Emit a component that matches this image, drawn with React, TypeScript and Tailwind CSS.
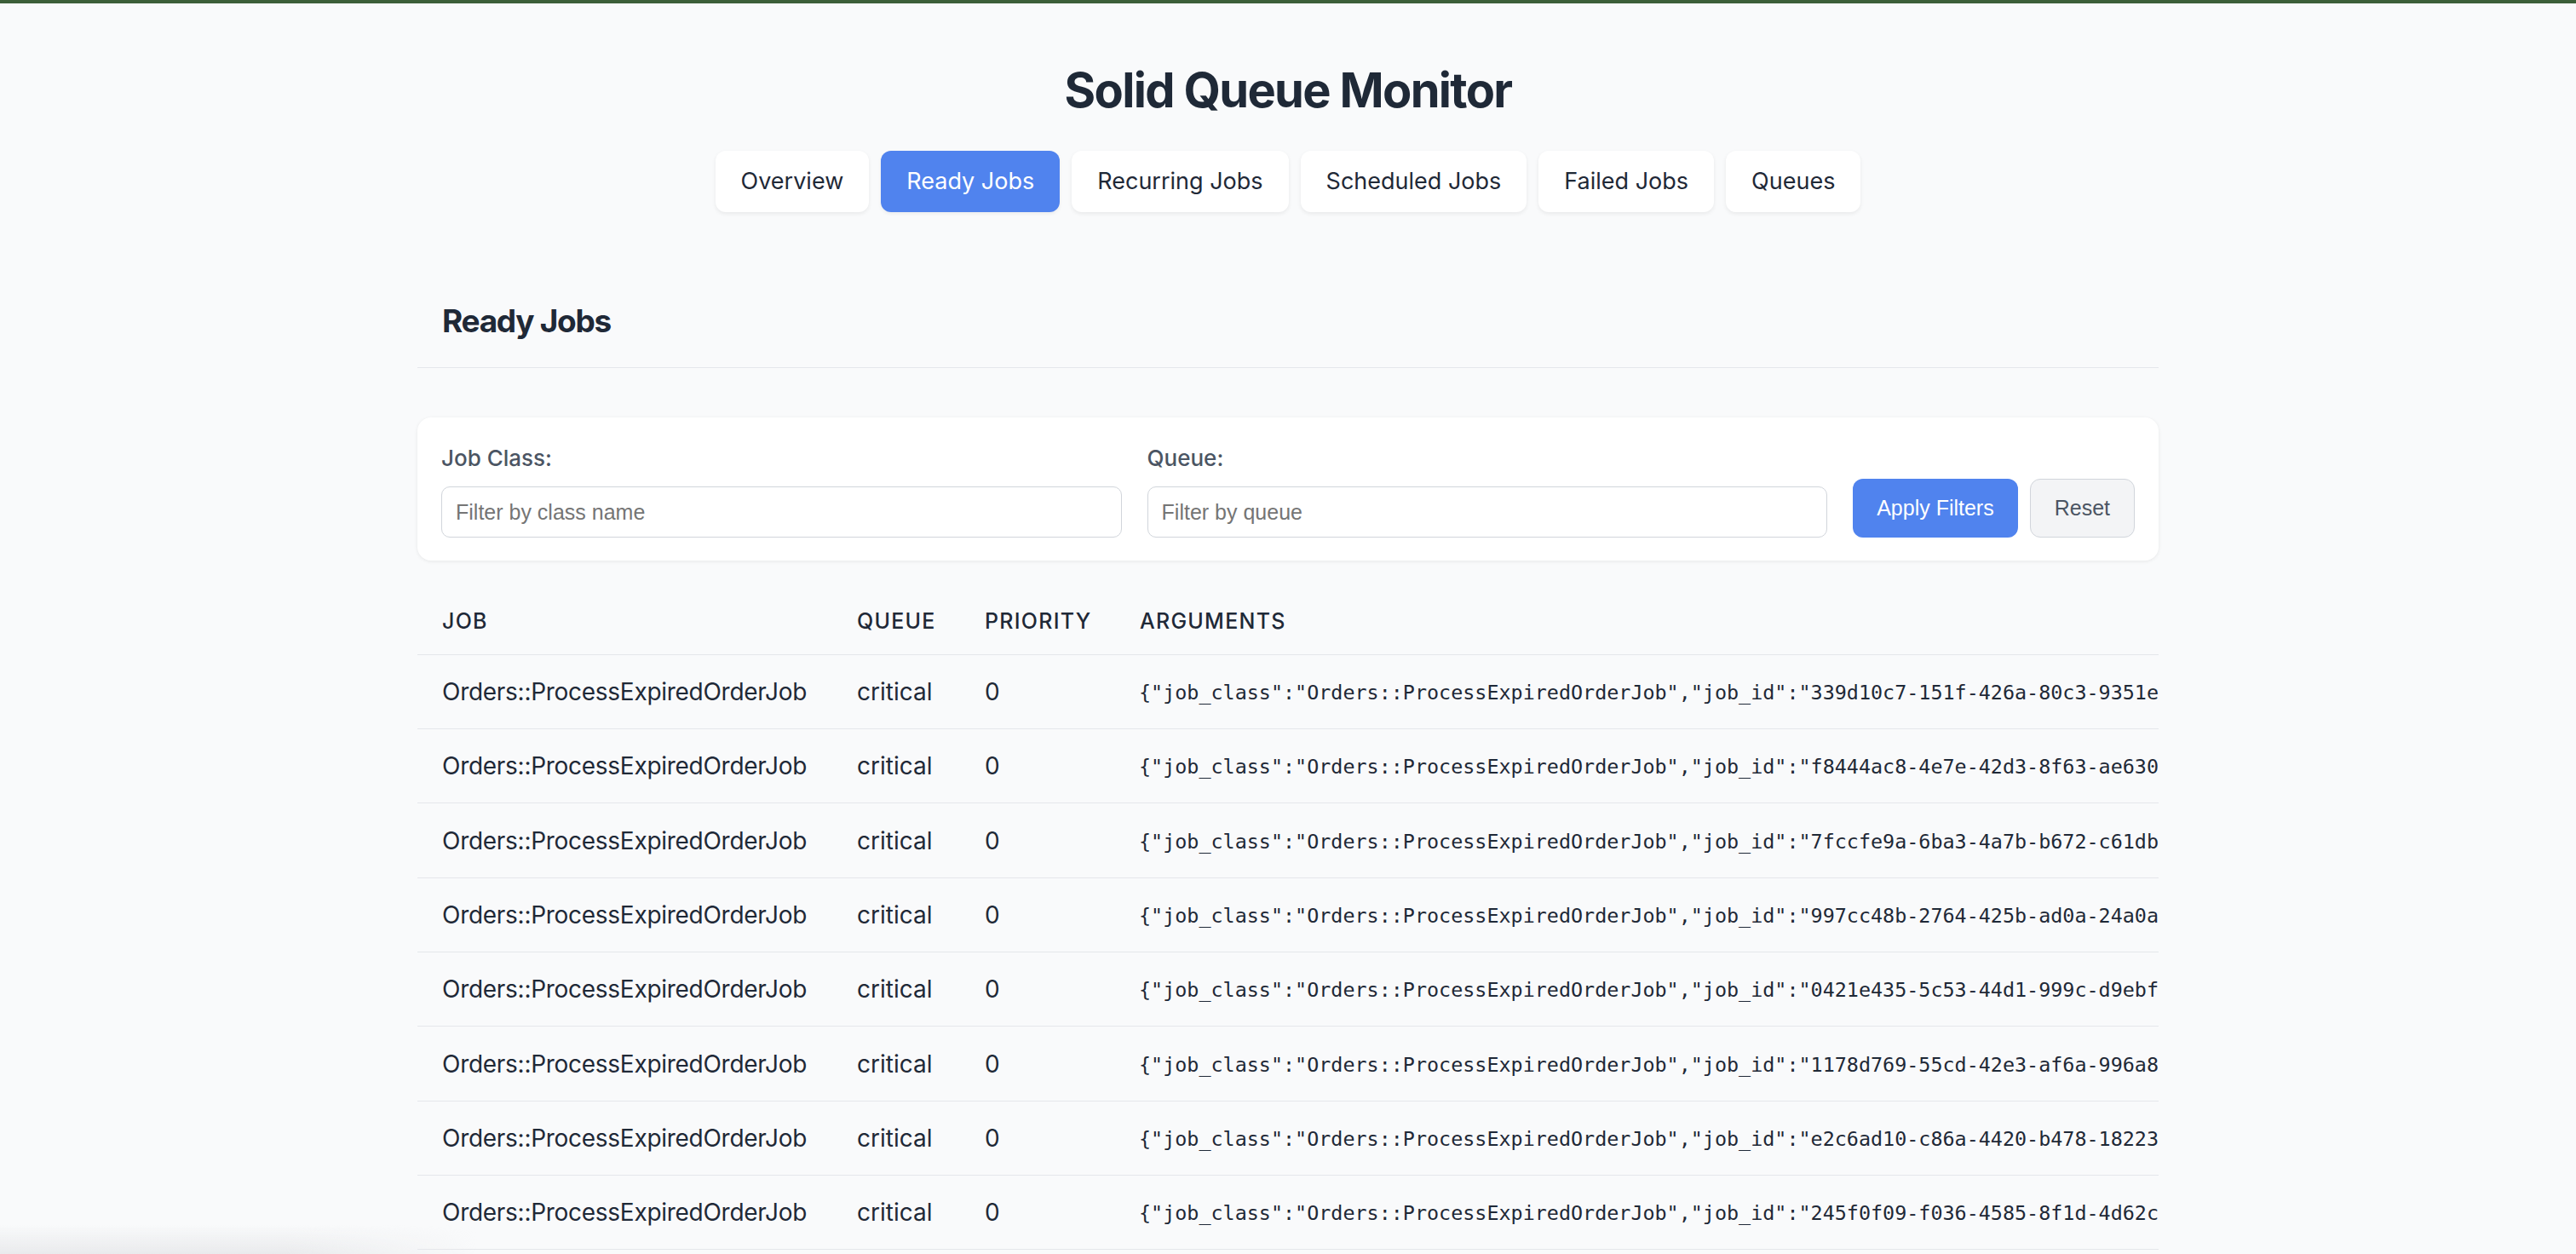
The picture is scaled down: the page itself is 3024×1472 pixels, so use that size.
import React from "react";

const ids = [
  "339d10c7-151f-426a-80c3-9351e8a2c0d1",
  "f8444ac8-4e7e-42d3-8f63-ae630b1c7e22",
  "7fccfe9a-6ba3-4a7b-b672-c61db93f0a11",
  "997cc48b-2764-425b-ad0a-24a0a7d3e5f4",
  "0421e435-5c53-44d1-999c-d9ebf2a61b08",
  "1178d769-55cd-42e3-af6a-996a8c0e4d37",
  "e2c6ad10-c86a-4420-b478-18223f9b6a5c",
  "245f0f09-f036-4585-8f1d-4d62c8e1a09b",
];

const tabs = ["Overview", "Ready Jobs", "Recurring Jobs", "Scheduled Jobs", "Failed Jobs", "Queues"];

export default function App() {
  return (
    <div className="min-h-screen bg-[#f9fafb] text-[#1f2937] font-['Inter',sans-serif] overflow-hidden relative">
      <div className="h-[4px] bg-[#3c5f39]" />
      <h1 className="mt-[74px] text-center text-[56px] leading-none font-bold tracking-[-0.03em]">
        Solid Queue Monitor
      </h1>
      <nav className="mt-[43px] flex justify-center gap-[14px]">
        {tabs.map((t) => (
          <div
            key={t}
            className={
              t === "Ready Jobs"
                ? "h-[72px] px-[30px] flex items-center rounded-[12px] bg-[#5083ee] text-white text-[27px] shadow-[0_2px_4px_rgba(0,0,0,0.06)]"
                : "h-[72px] px-[30px] flex items-center rounded-[12px] bg-white text-[#1f2937] text-[27px] shadow-[0_2px_5px_rgba(0,0,0,0.07)]"
            }
          >
            {t}
          </div>
        ))}
      </nav>
      <main className="w-[2044px] mx-auto mt-[109px]">
        <div className="px-[29px] pb-[36px] border-b border-[#e5e7eb]">
          <h2 className="text-[37px] leading-none font-bold tracking-[-0.035em]">Ready Jobs</h2>
        </div>
        <div className="mt-[58px] bg-white rounded-[16px] shadow-[0_1px_4px_rgba(0,0,0,0.08)] px-[28px] pt-[28px] pb-[27px] flex items-end gap-[30px]">
          <div className="flex-1">
            <div className="text-[26px] leading-[1.5] font-medium text-[#4b5563]">Job Class:</div>
            <input
              placeholder="Filter by class name"
              className="mt-[14px] w-full h-[60px] rounded-[10px] border border-[#d1d5db] bg-white px-[16px] text-[25px] font-['Liberation_Sans',sans-serif] placeholder:text-[#757575] outline-none"
            />
          </div>
          <div className="flex-1">
            <div className="text-[26px] leading-[1.5] font-medium text-[#4b5563]">Queue:</div>
            <input
              placeholder="Filter by queue"
              className="mt-[14px] w-full h-[60px] rounded-[10px] border border-[#d1d5db] bg-white px-[16px] text-[25px] font-['Liberation_Sans',sans-serif] placeholder:text-[#757575] outline-none"
            />
          </div>
          <div className="flex gap-[14px]">
            <button className="h-[69px] px-[28px] rounded-[12px] bg-[#5083ee] text-white text-[25px] font-['Liberation_Sans',sans-serif]">
              Apply Filters
            </button>
            <button className="h-[69px] px-[28px] rounded-[12px] bg-[#f3f4f6] border border-[#d1d5db] text-[#4b5563] text-[25px] font-['Liberation_Sans',sans-serif]">
              Reset
            </button>
          </div>
        </div>
        <div className="mt-[28px] overflow-hidden">
          <div className="grid grid-cols-[487px_150px_182px_1fr] border-b border-[#e5e7eb] text-[25px] leading-[1.5] font-medium uppercase tracking-[0.05em] text-[#1f2937]">
            <div className="pl-[29px] pt-[25px] pb-[19.34px]">Job</div>
            <div className="pl-[29px] pt-[25px] pb-[19.34px]">Queue</div>
            <div className="pl-[29px] pt-[25px] pb-[19.34px]">Priority</div>
            <div className="pl-[29px] pt-[25px] pb-[19.34px]">Arguments</div>
          </div>
          {ids.map((id) => (
            <div
              key={id}
              className="grid grid-cols-[487px_150px_182px_1fr] border-b border-[#e5e7eb] h-[87.33px] items-center text-[28px] text-[#1f2937]"
            >
              <div className="pl-[29px] whitespace-nowrap tracking-[-0.01em]">Orders::ProcessExpiredOrderJob</div>
              <div className="pl-[29px]">critical</div>
              <div className="pl-[29px]">0</div>
              <div className="pl-[28px] pt-[3px] whitespace-nowrap overflow-hidden font-['DejaVu_Sans_Mono',monospace] text-[23.4px]">
                {`{"job_class":"Orders::ProcessExpiredOrderJob","job_id":"${id}","provider_job_id":null,"queue_name":"critical","priority":0,"arguments":[],"executions":0}`}
              </div>
            </div>
          ))}
        </div>
      </main>
      <div className="absolute left-0 bottom-0 w-[560px] h-[34px] bg-gradient-to-b from-transparent to-[#e9eaec] [mask-image:linear-gradient(to_right,black_60%,transparent)] pointer-events-none" />
    </div>
  );
}
